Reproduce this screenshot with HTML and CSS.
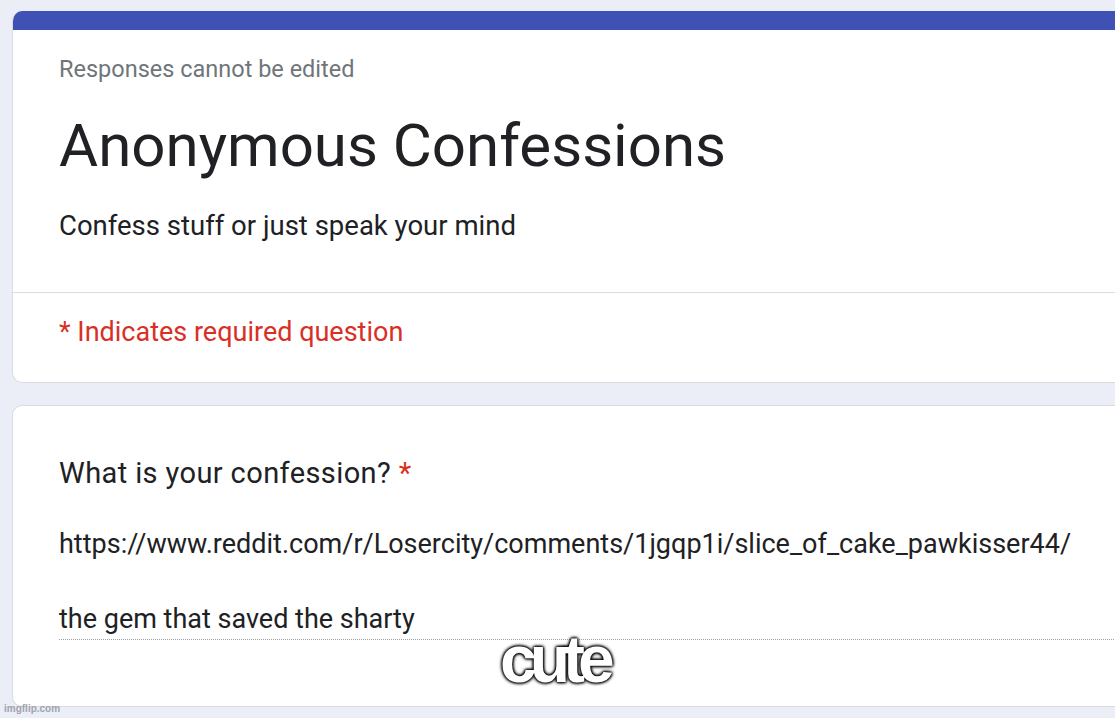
FILE: index.html
```html
<!DOCTYPE html>
<html>
<head>
<meta charset="utf-8">
<link rel="stylesheet" href="styles.css">
</head>
<body>
<div class="page">
  <section class="card card-header">
    <div class="accent"></div>
    <div class="header-body">
      <div class="note">Responses cannot be edited</div>
      <h1 class="title">Anonymous Confessions</h1>
      <div class="desc">Confess stuff or just speak your mind</div>
    </div>
    <div class="divider"></div>
    <div class="required-note">* Indicates required question</div>
  </section>
  <section class="card card-question">
    <div class="question">What is your confession? <span class="star">*</span></div>
    <div class="answer">
      <p class="line">https://www.reddit.com/r/Losercity/comments/1jgqp1i/slice_of_cake_pawkisser44/</p>
      <p class="line last">the gem that saved the sharty</p>
    </div>
  </section>
  <div class="caption">cute</div>
  <div class="watermark">imgflip.com</div>
</div>
</body>
</html>
```
FILE: styles.css
```css
html, body {
  margin: 0;
  padding: 0;
  height: 100%;
  overflow: hidden;
}
body {
  background: #ebedf7;
  font-family: Roboto, "Liberation Sans", sans-serif;
  color: #202124;
}
.page {
  position: relative;
  height: 718px;
  padding-top: 11px;
  box-sizing: border-box;
}
.card {
  margin-left: 12px;
  width: 1200px;
  background: #fff;
  border: 1px solid #dadce0;
  border-right: none;
  border-radius: 10px 0 0 10px;
  box-sizing: border-box;
}
.card-header {
  height: 372px;
  border-top: none;
  overflow: hidden;
}
.accent {
  height: 19px;
  background: #3f51b5;
  margin-left: -1px;
}
.header-body {
  padding: 25px 0 0 46px;
  height: 262px;
  box-sizing: border-box;
}
.note {
  font-size: 23.5px;
  line-height: 28px;
  color: #70757a;
}
.title {
  margin: 28px 0 0;
  font-size: 60px;
  font-weight: 400;
  line-height: 70px;
}
.desc {
  margin-top: 29px;
  font-size: 27.5px;
  line-height: 32px;
}
.divider {
  height: 1px;
  background: #dadce0;
}
.required-note {
  padding: 23px 0 0 46px;
  font-size: 27px;
  line-height: 32px;
  color: #d93025;
}
.card-question {
  margin-top: 22px;
  height: 302px;
  padding: 50px 0 0 46px;
}
.question {
  font-size: 29px;
  line-height: 34px;
  letter-spacing: 0.4px;
}
.star {
  color: #d93025;
}
.answer {
  margin-top: 38px;
  border-bottom: 1px dotted #9aa0a6;
}
.line {
  margin: 0;
  font-size: 27px;
  line-height: 32px;
}
.line.last {
  margin-top: 43px;
  padding-bottom: 4px;
}
.caption {
  position: absolute;
  left: 500px;
  top: 621px;
  font-family: "Liberation Sans", Arial, sans-serif;
  font-weight: 700;
  font-size: 66px;
  letter-spacing: -7px;
  color: #fff;
  text-shadow: 0 0 3px #000, 0 0 3px #000, 0 0 3px #000, 0 0 4px #000;
}
.watermark {
  position: absolute;
  left: 4px;
  top: 703px;
  font-family: "Liberation Sans", Arial, sans-serif;
  font-size: 10px;
  font-weight: 700;
  color: #a0a3ad;
}
```
